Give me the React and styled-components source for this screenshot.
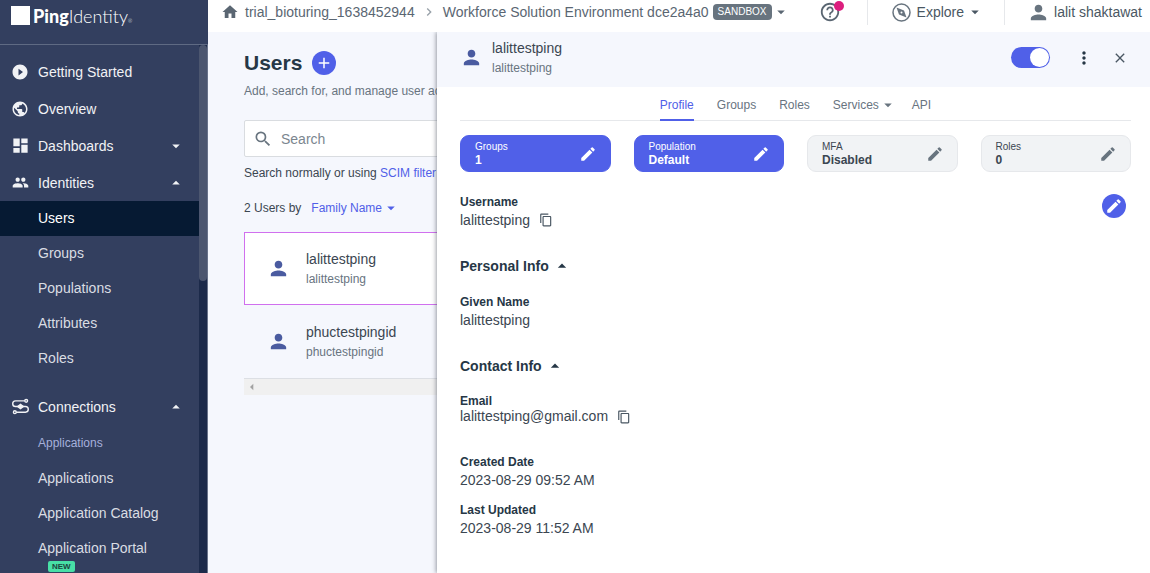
import React from "react";
import styled, { createGlobalStyle, css } from "styled-components";
import {
  MdPlayCircleFilled, MdPublic, MdDashboard, MdPeople, MdHome, MdChevronRight,
  MdArrowDropDown, MdArrowDropUp, MdArrowLeft, MdPerson, MdHelpOutline, MdMoreVert,
  MdClose, MdEdit, MdContentCopy, MdAdd, MdSearch,
} from "react-icons/md";

const c = {
  navy: "#333f5f",
  navyActive: "#061a33",
  track: "#1c2a4a",
  thumb: "#4c566f",
  accent: "#5060e8",
  wash: "#f5f7fd",
  text: "#3b4651",
  heading: "#263746",
  muted: "#68747f",
  icon: "#4a5ba0",
  line: "#e6e8eb",
};

const GlobalStyle = createGlobalStyle`
  * { box-sizing: border-box; }
  body {
    margin: 0;
    overflow: hidden;
    font: 14px/20px "Liberation Sans", Arial, sans-serif;
    color: ${c.text};
    background: #fff;
  }
  button, input { font: inherit; color: inherit; margin: 0; }
  button { background: none; border: 0; padding: 0; cursor: pointer; }
  a { text-decoration: none; color: inherit; }
  h1, h2, p, ul, dl, dd { margin: 0; padding: 0; }
  svg { display: block; flex: none; }
`;

const Shell = styled.div`
  display: flex;
  height: 100vh;
`;

/* ---------- sidebar ---------- */
const Sidebar = styled.aside`
  display: flex;
  flex-direction: column;
  flex: 0 0 208px;
  background: ${c.navy};
  color: #f1f2f5;
`;

const Logo = styled.div`
  display: flex;
  align-items: center;
  gap: 3px;
  height: 45px;
  padding: 0 11px 13px;
  border-bottom: 1px solid #5f6a83;
  color: #fff;
  font: 400 18px/20px Lato, sans-serif;
  b { font-weight: 900; }
  span { font-weight: 300; }
  sup { font-size: 5px; line-height: 5px; vertical-align: baseline; }
`;

const LogoMark = styled.i`
  width: 19px;
  height: 19px;
  background: #fff;
`;

const NavScroll = styled.div`
  display: flex;
  flex: 1;
  min-height: 0;
`;

const Nav = styled.nav`
  flex: 1;
  overflow: hidden;
  padding-top: 8px;
`;

const ScrollTrack = styled.div`
  width: 9px;
  background: ${c.track};
  border-right: 1px solid #69738a;
`;

const ScrollThumb = styled.div`
  height: 236px;
  border-radius: 4px;
  background: ${c.thumb};
`;

const NavButton = styled.button`
  display: flex;
  align-items: center;
  width: 100%;
  height: 37px;
  padding: 0 14px 0 11px;
  gap: 9px;
  text-align: left;
`;

const NavIcon = styled.span`
  display: flex;
  justify-content: center;
  width: 18px;
`;

const Grow = styled.span`
  flex: 1;
`;

const SubList = styled.ul`
  list-style: none;
  margin-bottom: 12px;
`;

const SubLink = styled.a`
  display: block;
  padding-left: 38px;
  line-height: 35px;
  color: #dadde3;
  ${(p) => p.$active && css`background: ${c.navyActive}; color: #fff;`}
`;

const SubCaption = styled.p`
  padding-left: 38px;
  font-size: 12px;
  line-height: 36px;
  color: #a6b0dc;
`;

const BadgeLink = styled(SubLink)`
  display: flex;
  flex-direction: column;
  align-items: flex-start;
  gap: 3px;
  padding-top: 8px;
  line-height: 19px;
`;

const NewBadge = styled.span`
  margin-left: 10px;
  padding: 0 4px;
  border-radius: 2px;
  background: #48dfa6;
  color: #1c4440;
  font-size: 8px;
  font-weight: 700;
  line-height: 11px;
`;

/* ---------- top bar ---------- */
const Main = styled.main`
  display: flex;
  flex-direction: column;
  flex: 1;
  min-width: 0;
`;

const TopBar = styled.header`
  display: flex;
  align-items: center;
  height: 32px;
  padding: 0 8px 8px 13px;
  white-space: nowrap;
  color: #5a6672;
`;

const Crumbs = styled.nav`
  display: flex;
  align-items: center;
  flex: 1;
  gap: 6px;
`;

const EnvButton = styled.button`
  display: flex;
  align-items: center;
`;

const EnvTag = styled.span`
  margin-left: 4px;
  padding: 0 5px;
  border-radius: 4px;
  background: #68747f;
  color: #fff;
  font-size: 10px;
  line-height: 16px;
`;

const HelpButton = styled.button`
  position: relative;
  margin-right: 26px;
`;

const Dot = styled.span`
  position: absolute;
  top: 0;
  right: -3px;
  width: 10px;
  height: 10px;
  border-radius: 50%;
  background: #dc1e7e;
`;

const BarButton = styled.button`
  display: flex;
  align-items: center;
  height: 26px;
  gap: ${(p) => p.$gap}px;
  padding: 0 ${(p) => p.$right}px 0 ${(p) => p.$left}px;
  border-left: 1px solid ${c.line};
  color: #4a5763;
`;

const CaretLabel = styled.span`
  display: flex;
  align-items: center;
  gap: ${(p) => p.$gap}px;
`;

/* ---------- users list ---------- */
const Body = styled.div`
  display: flex;
  flex: 1;
  min-height: 0;
`;

const ListPane = styled.section`
  flex: 0 0 229px;
  overflow: hidden;
  padding: 19px 0 0 36px;
  background: ${c.wash};
  white-space: nowrap;
`;

const TitleRow = styled.div`
  display: flex;
  align-items: center;
  gap: 10px;
`;

const Title = styled.h1`
  font-size: 21px;
  line-height: 24px;
  color: ${c.heading};
`;

const RoundButton = styled.button`
  display: flex;
  align-items: center;
  justify-content: center;
  width: 24px;
  height: 24px;
  border-radius: 50%;
  background: ${c.accent};
  color: #fff;
`;

const Intro = styled.p`
  margin-top: 8px;
  font-size: 12px;
  line-height: 16px;
  color: ${c.muted};
`;

const SearchBox = styled.label`
  display: flex;
  align-items: center;
  width: 320px;
  height: 37px;
  margin-top: 21px;
  padding-left: 8px;
  gap: 8px;
  border: 1px solid #d9dce0;
  border-radius: 2px;
  background: #fff;
  color: ${c.muted};
  input {
    flex: 1;
    min-width: 0;
    padding: 0;
    border: 0;
    outline: 0;
    background: none;
  }
  input::placeholder { color: #7b868f; opacity: 1; }
`;

const Hint = styled.p`
  margin-top: 8px;
  font-size: 12px;
  line-height: 16px;
  a { color: ${c.accent}; }
`;

const SortRow = styled.div`
  display: flex;
  align-items: center;
  gap: 10px;
  margin-top: 18px;
  font-size: 12px;
  line-height: 16px;
`;

const SortButton = styled.button`
  display: flex;
  align-items: center;
  color: ${c.accent};
`;

const UserList = styled.ul`
  width: 320px;
  margin-top: 15px;
  list-style: none;
  border-bottom: 1px solid #dcdfe4;
`;

const UserRow = styled.li`
  display: flex;
  align-items: center;
  height: 73px;
  gap: 16px;
  padding-left: 22px;
  border: 1px solid ${(p) => (p.$selected ? "#d070ee" : "transparent")};
  background: ${(p) => (p.$selected ? "#fff" : "transparent")};
`;

const Person = styled.div`
  display: flex;
  flex-direction: column;
  color: ${c.text};
  small { font-size: 12px; line-height: 20px; color: ${c.muted}; }
`;

const ListScroll = styled.div`
  width: 320px;
  background: #f0f0f0;
  color: #a2a2a2;
`;

/* ---------- detail panel ---------- */
const Panel = styled.section`
  position: relative;
  flex: 1;
  min-width: 0;
  background: #fff;
  box-shadow: -1px 0 4px rgba(60, 66, 80, 0.5);
  clip-path: inset(0 0 0 -6px);
`;

const PanelHeader = styled.div`
  display: flex;
  align-items: center;
  height: 55px;
  padding: 0 20px 4px 23px;
  gap: 9px;
  background: ${c.wash};
`;

const Toggle = styled.input`
  appearance: none;
  width: 39px;
  height: 21px;
  padding: 1px;
  border-radius: 11px;
  background: ${c.accent};
  cursor: pointer;
  &::before {
    content: "";
    display: block;
    width: 19px;
    height: 19px;
    margin-left: 18px;
    border-radius: 50%;
    background: #fff;
  }
`;

const IconButton = styled.button`
  display: flex;
  align-items: center;
  justify-content: center;
  min-width: 20px;
  height: 20px;
  color: ${(p) => p.$color || "#4a5763"};
`;

const HeaderTools = styled.div`
  display: flex;
  align-items: center;
  gap: ${(p) => p.$gap}px;
`;

const Content = styled.div`
  padding: 0 19px 0 23px;
`;

const Tabs = styled.div`
  display: flex;
  justify-content: center;
  gap: 23px;
  height: 34px;
  border-bottom: 1px solid ${c.line};
`;

const Tab = styled.button`
  display: flex;
  align-items: center;
  height: 34px;
  padding-top: 3px;
  border-bottom: 2px solid ${(p) => (p.$active ? c.accent : "transparent")};
  color: ${(p) => (p.$active ? c.accent : c.muted)};
  font-size: 12px;
  svg { margin-right: -8px; }
`;

const Chips = styled.div`
  display: grid;
  grid-template-columns: repeat(4, 1fr);
  gap: 23px;
  margin-top: 14px;
`;

const Chip = styled.button`
  display: flex;
  align-items: center;
  justify-content: space-between;
  height: 37px;
  padding: 0 13px 0 14px;
  border: 1px solid ${(p) => (p.$filled ? c.accent : c.line)};
  border-radius: 9px;
  background: ${(p) => (p.$filled ? c.accent : "#f1f3f5")};
  color: ${(p) => (p.$filled ? "#fff" : c.muted)};
  text-align: left;
  font-size: 10px;
  line-height: 13px;
  span { color: ${(p) => (p.$filled ? "#fff" : c.text)}; }
  b { display: block; font-size: 12px; line-height: 15px; }
`;

const ProfileTop = styled.div`
  display: flex;
  justify-content: space-between;
  align-items: flex-start;
  margin-top: 22px;
  padding-right: 5px;
`;

const Field = styled.dl`
  margin-top: ${(p) => p.$top || 0}px;
  dt { font-size: 12px; font-weight: 700; line-height: 16px; color: ${c.heading}; }
  dd {
    display: flex;
    align-items: center;
    gap: 6px;
    line-height: 20px;
    height: 20px;
  }
`;

const TightField = styled(Field)`
  dt { line-height: 15px; }
  dd { height: 15px; line-height: 15px; }
`;

const SectionTitle = styled.h2`
  margin-top: 26px;
  font-size: 14px;
  line-height: 20px;
  color: ${c.heading};
  button { display: flex; align-items: center; gap: 3px; font-weight: 700; }
`;

function ConnectionsIcon() {
  return (
    <svg width="17" height="17" viewBox="0 0 24 24" fill="none" stroke="currentColor" strokeWidth="2">
      <circle cx="20" cy="4" r="2" />
      <circle cx="4" cy="20" r="2" />
      <path d="M18 4H5a4 4 0 0 0 0 8h14a4 4 0 0 1 0 8H6" />
      <path d="M8 12l4-3 4 3-4 3z" fill="currentColor" />
    </svg>
  );
}

function CompassIcon() {
  return (
    <svg width="19" height="19" viewBox="0 0 38 38">
      <circle cx="19" cy="19" r="17" fill="none" stroke="#68747f" strokeWidth="3" />
      <path d="M9 9L24 15 29 29 14 23Z" fill="#68747f" />
      <circle cx="19" cy="19" r="2" fill="#fff" />
    </svg>
  );
}

function Who({ name }) {
  return (
    <Person>
      <span>{name}</span>
      <small>{name}</small>
    </Person>
  );
}

function NavGroup({ icon, label, open }) {
  return (
    <NavButton>
      <NavIcon>{icon}</NavIcon>
      <Grow>{label}</Grow>
      {open === true && <MdArrowDropUp size={18} />}
      {open === false && <MdArrowDropDown size={18} />}
    </NavButton>
  );
}

const identityLinks = ["Users", "Groups", "Populations", "Attributes", "Roles"];
const chips = [
  { label: "Groups", value: "1", filled: true },
  { label: "Population", value: "Default", filled: true },
  { label: "MFA", value: "Disabled" },
  { label: "Roles", value: "0" },
];

export default function App() {
  return (
    <>
      <GlobalStyle />
      <Shell>
        <Sidebar>
          <Logo>
            <LogoMark />
            <span><b>Ping</b>Identity<sup>®</sup></span>
          </Logo>
          <NavScroll>
            <Nav aria-label="Main">
              <NavGroup icon={<MdPlayCircleFilled size={18} />} label="Getting Started" />
              <NavGroup icon={<MdPublic size={18} />} label="Overview" />
              <NavGroup icon={<MdDashboard size={19} />} label="Dashboards" open={false} />
              <NavGroup icon={<MdPeople size={17} />} label="Identities" open />
              <SubList>
                {identityLinks.map((label) => (
                  <li key={label}>
                    <SubLink href="#" $active={label === "Users"}>{label}</SubLink>
                  </li>
                ))}
              </SubList>
              <NavGroup icon={<ConnectionsIcon />} label="Connections" open />
              <SubCaption>Applications</SubCaption>
              <SubList>
                <li><SubLink href="#">Applications</SubLink></li>
                <li><SubLink href="#">Application Catalog</SubLink></li>
                <li>
                  <BadgeLink href="#">
                    Application Portal
                    <NewBadge>NEW</NewBadge>
                  </BadgeLink>
                </li>
              </SubList>
            </Nav>
            <ScrollTrack><ScrollThumb /></ScrollTrack>
          </NavScroll>
        </Sidebar>

        <Main>
          <TopBar>
            <Crumbs aria-label="Breadcrumb">
              <MdHome size={18} />
              <a href="#">trial_bioturing_1638452944</a>
              <MdChevronRight size={16} color="#98a1a9" />
              <EnvButton>
                Workforce Solution Environment dce2a4a0
                <EnvTag>SANDBOX</EnvTag>
                <MdArrowDropDown size={18} />
              </EnvButton>
            </Crumbs>
            <HelpButton aria-label="Help">
              <MdHelpOutline size={22} />
              <Dot />
            </HelpButton>
            <BarButton $gap={6} $left={24} $right={20}>
              <CompassIcon />
              <CaretLabel $gap={2}>
                Explore
                <MdArrowDropDown size={18} />
              </CaretLabel>
            </BarButton>
            <BarButton $gap={4} $left={22} $right={0}>
              <MdPerson size={23} color="#68747f" />
              lalit shaktawat
            </BarButton>
          </TopBar>

          <Body>
            <ListPane>
              <TitleRow>
                <Title>Users</Title>
                <RoundButton aria-label="Add user"><MdAdd size={18} /></RoundButton>
              </TitleRow>
              <Intro>Add, search for, and manage user accounts.</Intro>
              <SearchBox>
                <MdSearch size={20} />
                <input type="text" placeholder="Search" aria-label="Search" />
              </SearchBox>
              <Hint>Search normally or using <a href="#">SCIM filter</a></Hint>
              <SortRow>
                <span>2 Users by</span>
                <SortButton>Family Name<MdArrowDropDown size={18} /></SortButton>
              </SortRow>
              <UserList>
                <UserRow $selected>
                  <MdPerson size={23} color={c.icon} />
                  <Who name="lalittestping" />
                </UserRow>
                <UserRow>
                  <MdPerson size={23} color={c.icon} />
                  <Who name="phuctestpingid" />
                </UserRow>
              </UserList>
              <ListScroll><MdArrowLeft size={16} /></ListScroll>
            </ListPane>

            <Panel>
              <PanelHeader>
                <MdPerson size={23} color={c.icon} />
                <Who name="lalittestping" />
                <Grow />
                <HeaderTools $gap={24}>
                  <Toggle type="checkbox" role="switch" defaultChecked aria-label="User enabled" />
                  <HeaderTools $gap={16}>
                    <IconButton aria-label="More actions" $color={c.heading}><MdMoreVert size={20} /></IconButton>
                    <IconButton aria-label="Close"><MdClose size={16} /></IconButton>
                  </HeaderTools>
                </HeaderTools>
              </PanelHeader>
              <Content>
                <Tabs>
                  <Tab $active>Profile</Tab>
                  <Tab>Groups</Tab>
                  <Tab>Roles</Tab>
                  <Tab>Services<MdArrowDropDown size={18} /></Tab>
                  <Tab>API</Tab>
                </Tabs>
                <Chips>
                  {chips.map((chip) => (
                    <Chip key={chip.label} $filled={chip.filled}>
                      <span>{chip.label}<b>{chip.value}</b></span>
                      <MdEdit size={18} />
                    </Chip>
                  ))}
                </Chips>
                <ProfileTop>
                  <Field>
                    <dt>Username</dt>
                    <dd>
                      lalittestping
                      <IconButton aria-label="Copy username"><MdContentCopy size={14} /></IconButton>
                    </dd>
                  </Field>
                  <RoundButton aria-label="Edit profile"><MdEdit size={18} /></RoundButton>
                </ProfileTop>
                <SectionTitle><button>Personal Info<MdArrowDropUp size={20} /></button></SectionTitle>
                <Field $top={18}>
                  <dt>Given Name</dt>
                  <dd>lalittestping</dd>
                </Field>
                <SectionTitle><button>Contact Info<MdArrowDropUp size={20} /></button></SectionTitle>
                <TightField $top={18}>
                  <dt>Email</dt>
                  <dd>
                    lalittestping@gmail.com
                    <IconButton aria-label="Copy email"><MdContentCopy size={14} /></IconButton>
                  </dd>
                </TightField>
                <Field $top={30}>
                  <dt>Created Date</dt>
                  <dd>2023-08-29 09:52 AM</dd>
                </Field>
                <Field $top={12}>
                  <dt>Last Updated</dt>
                  <dd>2023-08-29 11:52 AM</dd>
                </Field>
              </Content>
            </Panel>
          </Body>
        </Main>
      </Shell>
    </>
  );
}
